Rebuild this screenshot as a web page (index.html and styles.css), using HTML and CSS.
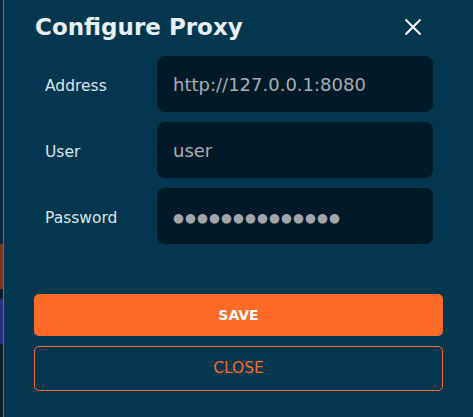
FILE: index.html
```html
<!DOCTYPE html>
<html>
<head>
<meta charset="utf-8">
<link rel="stylesheet" href="styles.css">
</head>
<body>
<div class="page">
  <div class="backdrop">
    <div class="bd-block bd-top"></div>
    <div class="bd-block bd-orange"></div>
    <div class="bd-gap"></div>
    <div class="bd-block bd-purple"></div>
    <div class="bd-fill"></div>
  </div>
  <div class="dialog">
    <div class="header">
      <h1 class="title">Configure Proxy</h1>
      <button class="close-x" aria-label="Close">
        <svg width="18" height="18" viewBox="0 0 18 18"><path d="M1.5 1.5 L16.5 16.5 M16.5 1.5 L1.5 16.5" stroke="#ffffff" stroke-width="2" fill="none"/></svg>
      </button>
    </div>
    <div class="form">
      <div class="label">Address</div>
      <div class="field">http://127.0.0.1:8080</div>
      <div class="label">User</div>
      <div class="field">user</div>
      <div class="label">Password</div>
      <div class="field dots">●●●●●●●●●●●●●●</div>
    </div>
    <div class="actions">
      <button class="btn btn-save">SAVE</button>
      <button class="btn btn-close">CLOSE</button>
    </div>
  </div>
</div>
</body>
</html>
```
FILE: styles.css
```css
html, body {
  margin: 0;
  padding: 0;
  background: #02374f;
}
body {
  font-family: "DejaVu Sans", sans-serif;
  width: 473px;
  height: 417px;
  overflow: hidden;
}
.page {
  display: flex;
  height: 417px;
}
.backdrop {
  width: 3px;
  display: flex;
  flex-direction: column;
  background: #0b1d2a;
}
.bd-top { height: 244px; background: #0b2638; }
.bd-orange { height: 45px; background: #7b3617; }
.bd-gap { height: 10px; background: #0b1d2a; }
.bd-purple { height: 45px; background: #2c2b80; }
.bd-fill { flex: 1; background: #0d1c28; }
.dialog {
  flex: 1;
  border-left: 1px solid #5f7482;
  background: #02374f;
  padding: 0 30px 0 30px;
  box-sizing: border-box;
}
.header {
  display: flex;
  align-items: center;
  justify-content: space-between;
  height: 54px;
  padding-left: 1px;
}
.title {
  margin: 0;
  font-size: 23px;
  font-weight: bold;
  color: #e8eef2;
  line-height: 1;
  padding-top: 1px;
}
.close-x {
  background: none;
  border: none;
  padding: 0;
  margin-right: 21px;
  width: 18px;
  height: 18px;
  display: flex;
  margin-top: -1px;
}
.form {
  display: grid;
  grid-template-columns: 122px 276px;
  row-gap: 10px;
  margin-top: 2px;
  margin-left: 1px;
}
.label {
  display: flex;
  align-items: center;
  padding-left: 10px;
  font-size: 15.5px;
  color: #dbe5ec;
  height: 56px;
  padding-top: 3px;
  box-sizing: border-box;
}
.field {
  height: 56px;
  background: #011a27;
  border-radius: 8px;
  display: flex;
  align-items: center;
  padding-left: 16px;
  font-size: 18px;
  color: #a7afb3;
  box-sizing: border-box;
  padding-top: 1px;
}
.dots {
  font-size: 12.5px;
  letter-spacing: 1.1px;
  color: #a3a7aa;
  padding-left: 16px;
  padding-top: 2px;
}
.actions {
  display: flex;
  flex-direction: column;
  gap: 10px;
  margin-top: 50px;
}
.btn {
  font-family: "DejaVu Sans", sans-serif;
  width: 409px;
  border-radius: 5px;
  font-size: 14px;
  font-weight: bold;
  cursor: pointer;
}
.btn-save {
  height: 42px;
  background: #ff6a28;
  border: none;
  color: #ffffff;
}
.btn-close {
  height: 45px;
  background: transparent;
  border: 1px solid #ff6a28;
  color: #ff6a28;
  font-weight: normal;
  font-size: 15.5px;
  padding-bottom: 2px;
}
```
